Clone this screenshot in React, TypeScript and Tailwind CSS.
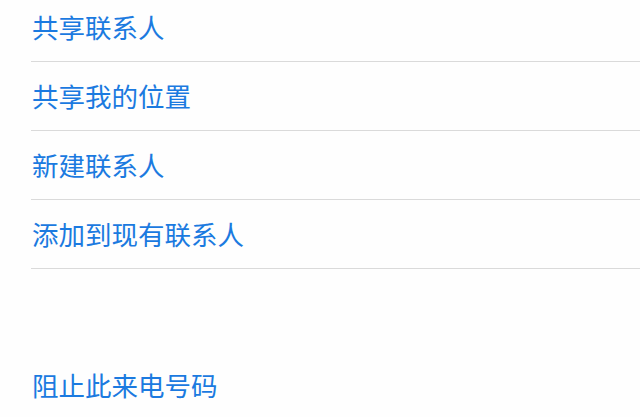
import React from "react";

const actions: string[] = ["共享联系人", "共享我的位置", "新建联系人", "添加到现有联系人"];

const ActionRow: React.FC<{ label: string; divider?: boolean }> = ({ label, divider = true }) => {
  return (
    <div className={`ml-[31px] h-[69px] flex items-center ${divider ? "border-b-[1.5px] border-[#dadada]" : ""}`}>
      <span className="ml-[1px] text-[26.5px] leading-none text-[#1b7ae0]">{label}</span>
    </div>
  );
};

const App: React.FC = () => {
  return (
    <div
      className="w-[640px] h-[417px] overflow-hidden bg-[#fefefe]"
      style={{ fontFamily: '"Noto Sans CJK SC", "Noto Sans", sans-serif' }}
    >
      <div className="-mt-[7px]">
        {actions.map((a) => (
          <ActionRow key={a} label={a} />
        ))}
      </div>
      <div className="mt-[82px]">
        <ActionRow label="阻止此来电号码" divider={false} />
      </div>
    </div>
  );
};

export default App;
